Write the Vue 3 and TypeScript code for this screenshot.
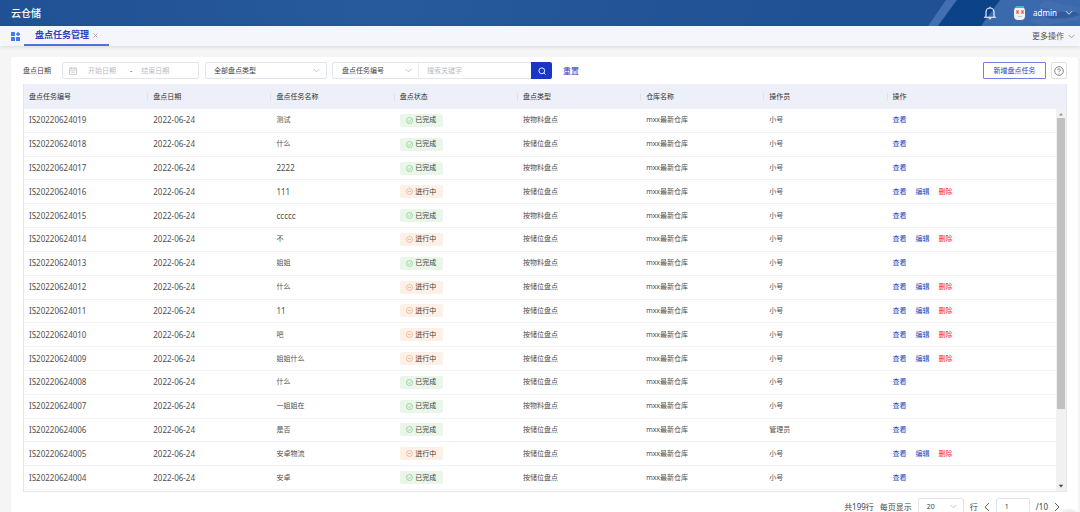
<script setup lang="ts">
import { ref } from 'vue'

interface Task {
  id: string
  date: string
  name: string
  done: boolean
  type: string
  store: string
  operator: string
}

const make = (no: number, name: string, done: boolean, type: string, operator = '小号'): Task => ({
  id: `IS202206240${String(no).padStart(2, '0')}`,
  date: '2022-06-24',
  name,
  done,
  type: `按${type}盘点`,
  store: 'mxx最新仓库',
  operator,
})

const tasks: Task[] = [
  make(19, '测试', true, '物料'),
  make(18, '什么', true, '储位'),
  make(17, '2222', true, '物料'),
  make(16, '111', false, '储位'),
  make(15, 'ccccc', true, '物料'),
  make(14, '不', false, '储位'),
  make(13, '姐姐', true, '物料'),
  make(12, '什么', false, '储位'),
  make(11, '11', false, '储位'),
  make(10, '吧', false, '储位'),
  make(9, '姐姐什么', false, '储位'),
  make(8, '什么', true, '储位'),
  make(7, '一姐姐在', true, '物料'),
  make(6, '是否', true, '储位', '管理员'),
  make(5, '安卓物流', false, '储位'),
  make(4, '安卓', true, '储位'),
]

const columns = ['盘点任务编号', '盘点日期', '盘点任务名称', '盘点状态', '盘点类型', '仓库名称', '操作员', '操作']
const isLatin = (text: string) => /^[\w-]+$/.test(text)

const start = ref('')
const end = ref('')
const keyword = ref('')
const page = ref('1')
</script>

<template>
  <div class="app">
    <header class="top">
      <svg class="top-art" viewBox="0 0 180 26" preserveAspectRatio="none" aria-hidden="true">
        <path d="M46 0h11L38 26H28z" fill="#426fb2" />
        <path d="M57 0h43L81 26H38z" fill="#0c4288" />
        <path d="M100 0h80v26H81z" fill="#3b69ae" />
        <path d="M144 0l36 8v7l-42-8zM128 20l52-6v6l-40 6z" fill="#476fae" opacity=".6" />
        <path d="M146 16l14-4 16 0 4 3-12 3-18 1z" fill="#2b5599" opacity=".7" />
      </svg>
      <h1 class="brand">云仓储</h1>
      <div class="user">
        <button class="plain bell" type="button" aria-label="通知">
          <svg width="14" height="14" viewBox="0 0 14 14" fill="none" stroke="#fff" stroke-width="1.1">
            <path d="M3 11V6a4 4 0 0 1 8 0v5M1 11.300h12M7 .8v1.400M5.800 12.800h2.400" />
          </svg>
        </button>
        <svg class="avatar" width="14" height="14" viewBox="0 0 14 14" aria-hidden="true">
          <rect x="1" y="1" width="11" height="13" rx="4" fill="#f3f0ee" />
          <path d="M3 0h8v2H3z" fill="#2cc5bd" />
          <path d="M3 4h3v4H3zM8 4h3v4H8z" fill="#ef9a98" />
          <path d="M4 5h1v2H4zM9 5h1v2H9z" fill="#c9687c" />
          <path d="M12 8h1v3h-1z" fill="#8d4f98" />
          <path d="M5 10h4v1H5z" fill="#a5d9cf" />
        </svg>
        <button class="plain account" type="button">
          admin
          <svg width="8" height="6" viewBox="0 0 8 6" fill="none" stroke="#dfe8f5"><path d="M1 1.2l3 3 3-3" /></svg>
        </button>
      </div>
    </header>

    <nav class="tabs">
      <button class="plain grid-btn" type="button" aria-label="全部应用">
        <svg width="9" height="9" viewBox="0 0 9 9" fill="#4774f2">
          <rect width="4" height="4" rx=".6" /><rect y="5" width="4" height="4" rx=".6" />
          <rect x="5" y="5" width="4" height="4" rx=".6" /><path d="M7 -.2L9.200 2 7 4.200 4.800 2z" />
        </svg>
      </button>
      <div class="tab">
        <a href="#tasks">盘点任务管理</a>
        <button class="plain close" type="button" aria-label="关闭">
          <svg width="5" height="5" viewBox="0 0 5 5" stroke="#8f9fc9" stroke-width=".8"><path d="M.5 .5l4 4M4.500 .5l-4 4" /></svg>
        </button>
      </div>
      <button class="plain more" type="button">
        更多操作
        <svg width="7" height="5" viewBox="0 0 7 5" fill="none" stroke="#888" stroke-width=".8"><path d="M.5 .8l3 3 3-3" /></svg>
      </button>
    </nav>

    <main id="tasks" class="panel">
      <form class="filters" @submit.prevent>
        <label class="label" for="start">盘点日期</label>
        <div class="field range">
          <svg width="8" height="8" viewBox="0 0 8 8" fill="none" stroke="#bfc3cc" stroke-width=".8">
            <path d="M.5 1.200h7v6.300h-7zM.5 3.200h7M2.300 0v2M5.700 0v2M2 5.200h4" />
          </svg>
          <input id="start" v-model="start" placeholder="开始日期" />
          <span class="dash">-</span>
          <input v-model="end" placeholder="结束日期" aria-label="结束日期" />
        </div>
        <div class="field kind">
          <select aria-label="盘点类型"><option>全部盘点类型</option></select>
          <svg class="chev" width="7" height="5" viewBox="0 0 7 5"><path d="M.5 .8l3 3 3-3" /></svg>
        </div>
        <div class="field search">
          <div class="search-key">
            <select aria-label="搜索字段"><option>盘点任务编号</option></select>
            <svg class="chev" width="7" height="5" viewBox="0 0 7 5"><path d="M.5 .8l3 3 3-3" /></svg>
          </div>
          <input v-model="keyword" placeholder="搜索关键字" aria-label="搜索关键字" />
          <button class="plain go" type="submit" aria-label="搜索">
            <svg width="8" height="8" viewBox="0 0 8 8" fill="none" stroke="#fff" stroke-width=".9">
              <circle cx="3.800" cy="3.800" r="2.900" /><path d="M5.900 5.900l1.600 1.600" />
            </svg>
          </button>
        </div>
        <a class="reset" href="#reset">重置</a>
        <button class="create" type="button">新增盘点任务</button>
        <button class="help" type="button" aria-label="帮助">
          <svg width="10" height="10" viewBox="0 0 10 10" fill="none" stroke="#666" stroke-width=".8">
            <circle cx="5" cy="5" r="4.300" /><path d="M3.700 4.100a1.300 1.300 0 1 1 1.900 1.100q-.6 .3-.6 .9M5 6.900v.8" />
          </svg>
        </button>
      </form>

      <div class="sheet">
        <table>
          <thead>
            <tr><th v-for="c in columns" :key="c" scope="col">{{ c }}</th></tr>
          </thead>
          <tbody>
            <tr v-for="t in tasks" :key="t.id">
              <td class="latin">{{ t.id }}</td>
              <td class="latin">{{ t.date }}</td>
              <td :class="{ latin: isLatin(t.name) }">{{ t.name }}</td>
              <td>
                <span class="tag" :class="t.done ? 'done' : 'doing'">
                  <svg width="7" height="7" viewBox="0 0 7 7" fill="none" stroke="currentColor" stroke-width=".7">
                    <circle cx="3.500" cy="3.500" r="3" />
                    <path :d="t.done ? 'M2 3.500l1.200 1.200L5.200 2.500' : 'M2 3.500h3'" />
                  </svg>
                  {{ t.done ? '已完成' : '进行中' }}
                </span>
              </td>
              <td>{{ t.type }}</td>
              <td>{{ t.store }}</td>
              <td>{{ t.operator }}</td>
              <td>
                <div class="ops">
                  <a href="#view">查看</a>
                  <a v-if="!t.done" href="#edit">编辑</a>
                  <a v-if="!t.done" class="danger" href="#delete">删除</a>
                </div>
              </td>
            </tr>
          </tbody>
        </table>
        <div class="bar" aria-hidden="true">
          <svg width="6" height="4" viewBox="0 0 6 4"><path d="M3 1l2 2.500H1z" fill="#999" /></svg>
          <div class="track"><div class="thumb"></div></div>
          <svg width="6" height="4" viewBox="0 0 6 4"><path d="M3 3.500L.8 .8h4.400z" fill="#444" /></svg>
        </div>
      </div>

      <footer class="pager">
        <span>共199行</span>
        <label for="size">每页显示</label>
        <div class="field size">
          <select id="size"><option>20</option></select>
          <svg class="chev" width="7" height="5" viewBox="0 0 7 5"><path d="M.5 .8l3 3 3-3" /></svg>
        </div>
        <span>行</span>
        <button class="plain" type="button" aria-label="上一页">
          <svg width="6" height="10" viewBox="0 0 6 10" fill="none" stroke="#666"><path d="M5 1L1 5l4 4" /></svg>
        </button>
        <div class="field number"><input v-model="page" aria-label="页码" /></div>
        <span>/10</span>
        <button class="plain" type="button" aria-label="下一页">
          <svg width="6" height="10" viewBox="0 0 6 10" fill="none" stroke="#666"><path d="M1 1l4 4-4 4" /></svg>
        </button>
      </footer>
    </main>
    <div class="float" aria-hidden="true"></div>
  </div>
</template>

<style>
body {
  margin: 0;
  overflow: hidden;
}
</style>

<style scoped>
.app {
  position: relative;
  display: flex;
  flex-direction: column;
  height: 100vh;
  overflow: hidden;
  background: #f5f5f5;
  color: #444;
  font: 7px/12px "Noto Sans", "Noto Sans CJK SC", sans-serif;
}
.app * {
  box-sizing: border-box;
}
svg {
  display: block;
  flex: none;
}
input,
select,
button {
  margin: 0;
  padding: 0;
  border: 0;
  background: none;
  color: inherit;
  font: inherit;
  appearance: none;
  outline: none;
  min-width: 0;
}
button {
  cursor: pointer;
}
a {
  color: #2b3fc0;
  text-decoration: none;
}
.plain {
  display: flex;
  align-items: center;
}
.top {
  position: relative;
  flex: none;
  display: flex;
  align-items: center;
  justify-content: space-between;
  height: 26px;
  padding: 0 7px 0 11px;
  background: linear-gradient(90deg, #205194, #27599d 35%, #205194 75%);
}
.top-art {
  position: absolute;
  top: 0;
  right: 0;
  width: 180px;
  height: 26px;
}
.brand {
  margin: 0;
  color: #fff;
  font-size: 10px;
  font-weight: 500;
}
.user {
  position: relative;
  display: flex;
  align-items: center;
  color: #fff;
  font-size: 8px;
}
.avatar {
  margin: 0 6px 0 16px;
}
.account {
  gap: 8px;
}
.tabs {
  position: relative;
  flex: none;
  display: flex;
  align-items: stretch;
  height: 20px;
  padding: 0 5px 0 11px;
  background: #f5f6fb;
  box-shadow: 0 1px 4px rgba(0, 0, 0, 0.12);
}
.tab {
  display: flex;
  align-items: center;
  gap: 4px;
  margin-left: 4px;
  padding: 0 11px;
  border-bottom: 2px solid #5470dc;
}
.tab a {
  font-size: 9px;
  font-weight: 700;
}
.more {
  gap: 4px;
  margin-left: auto;
  color: #555;
  font-size: 8px;
}
.panel {
  flex: 1;
  margin: 11px 2px 0 11px;
  padding: 5px 11px 0 12px;
  border-radius: 3px 3px 0 0;
  background: #fff;
}
.filters {
  display: flex;
  align-items: center;
  height: 17px;
}
.label {
  width: 39px;
}
.field {
  display: flex;
  align-items: center;
  height: 17px;
  border: 1px solid #e3e5ec;
  border-radius: 2px;
  background: #fff;
}
.chev {
  fill: none;
  stroke: #b4b8c2;
  stroke-width: 0.8;
  pointer-events: none;
}
select {
  flex: 1;
}
input::placeholder {
  color: #b9bcc5;
  opacity: 1;
}
.range {
  width: 137px;
  padding: 0 6px;
}
.range input {
  width: 42px;
  margin-left: 11px;
}
.dash {
  margin-right: -2px;
}
.kind {
  width: 122px;
  margin-left: 6px;
  padding: 0 6px 0 8px;
}
.search {
  width: 220px;
  margin-left: 5px;
}
.search-key {
  display: flex;
  align-items: center;
  width: 86px;
  height: 100%;
  padding: 0 6px 0 9px;
  border-right: 1px solid #e8eaf0;
}
.search input {
  flex: 1;
  padding-left: 8px;
}
.go {
  justify-content: center;
  width: 21px;
  height: 17px;
  margin-right: -1px;
  border-radius: 0 2px 2px 0;
  background: #1a36c6;
}
.reset {
  margin-left: 11px;
  font-size: 8px;
}
.create {
  width: 63px;
  height: 17px;
  margin-left: auto;
  border: 1px solid #7080dd;
  border-radius: 1px;
  color: #2b3fc0;
}
.help {
  display: flex;
  align-items: center;
  justify-content: center;
  width: 16px;
  height: 17px;
  margin-left: 5px;
  border: 1px solid #dddfe5;
  border-radius: 2px;
}
.sheet {
  position: relative;
  margin-top: 5px;
  padding: 0 10px 1px 0;
  border: 1px solid #e4e6ea;
  border-top: 0;
  background: linear-gradient(#edf0f8 25px, #fff 25px);
}
table {
  width: 100%;
  height: 406px;
  border-collapse: separate;
  border-spacing: 0;
  table-layout: fixed;
}
th,
td {
  padding: 0 0 0 5px;
  text-align: left;
  white-space: nowrap;
}
th {
  height: 25px;
  font-weight: 400;
  color: #333;
  background: linear-gradient(#dfe2ea, #dfe2ea) right center / 1px 8px no-repeat;
}
th:not(:last-child) {
  width: 11.94%;
}
th:first-child {
  width: 12.04%;
}
th:last-child {
  background: none;
}
td {
  border-bottom: 1px solid #f0f2f5;
  color: #505050;
}
.latin {
  font-size: 8px;
}
.tag {
  display: flex;
  align-items: center;
  justify-content: center;
  gap: 2px;
  width: 43px;
  height: 13px;
  border-radius: 2px;
  color: #444;
}
.done {
  background: #e9f6e9;
}
.doing {
  background: #fdf0e6;
}
.done svg {
  color: #7ccb83;
}
.doing svg {
  color: #eba87c;
}
.ops {
  display: flex;
  gap: 9px;
}
.ops .danger {
  color: #ff1a2d;
}
.bar {
  position: absolute;
  top: 25px;
  right: 0;
  bottom: 0;
  display: flex;
  flex-direction: column;
  align-items: center;
  gap: 2px;
  width: 10px;
  padding: 3px 0;
  background: #f1f1f1;
}
.track {
  flex: 1;
  width: 8px;
}
.thumb {
  height: 80%;
  background: #c1c1c1;
}
.pager {
  display: flex;
  align-items: center;
  justify-content: flex-end;
  gap: 6px;
  margin-top: 6px;
  padding-right: 7px;
  font-size: 8px;
}
.size {
  width: 46px;
  padding: 0 6px 0 8px;
  font-size: 7px;
}
.number {
  width: 34px;
  font-size: 7px;
}
.number input {
  width: 100%;
  padding-left: 8px;
}
.float {
  position: absolute;
  right: 0;
  bottom: -20px;
  width: 22px;
  height: 22px;
  border-radius: 50%;
  background: #ececec;
  box-shadow: 0 0 3px rgba(0, 0, 0, 0.15);
}
</style>
